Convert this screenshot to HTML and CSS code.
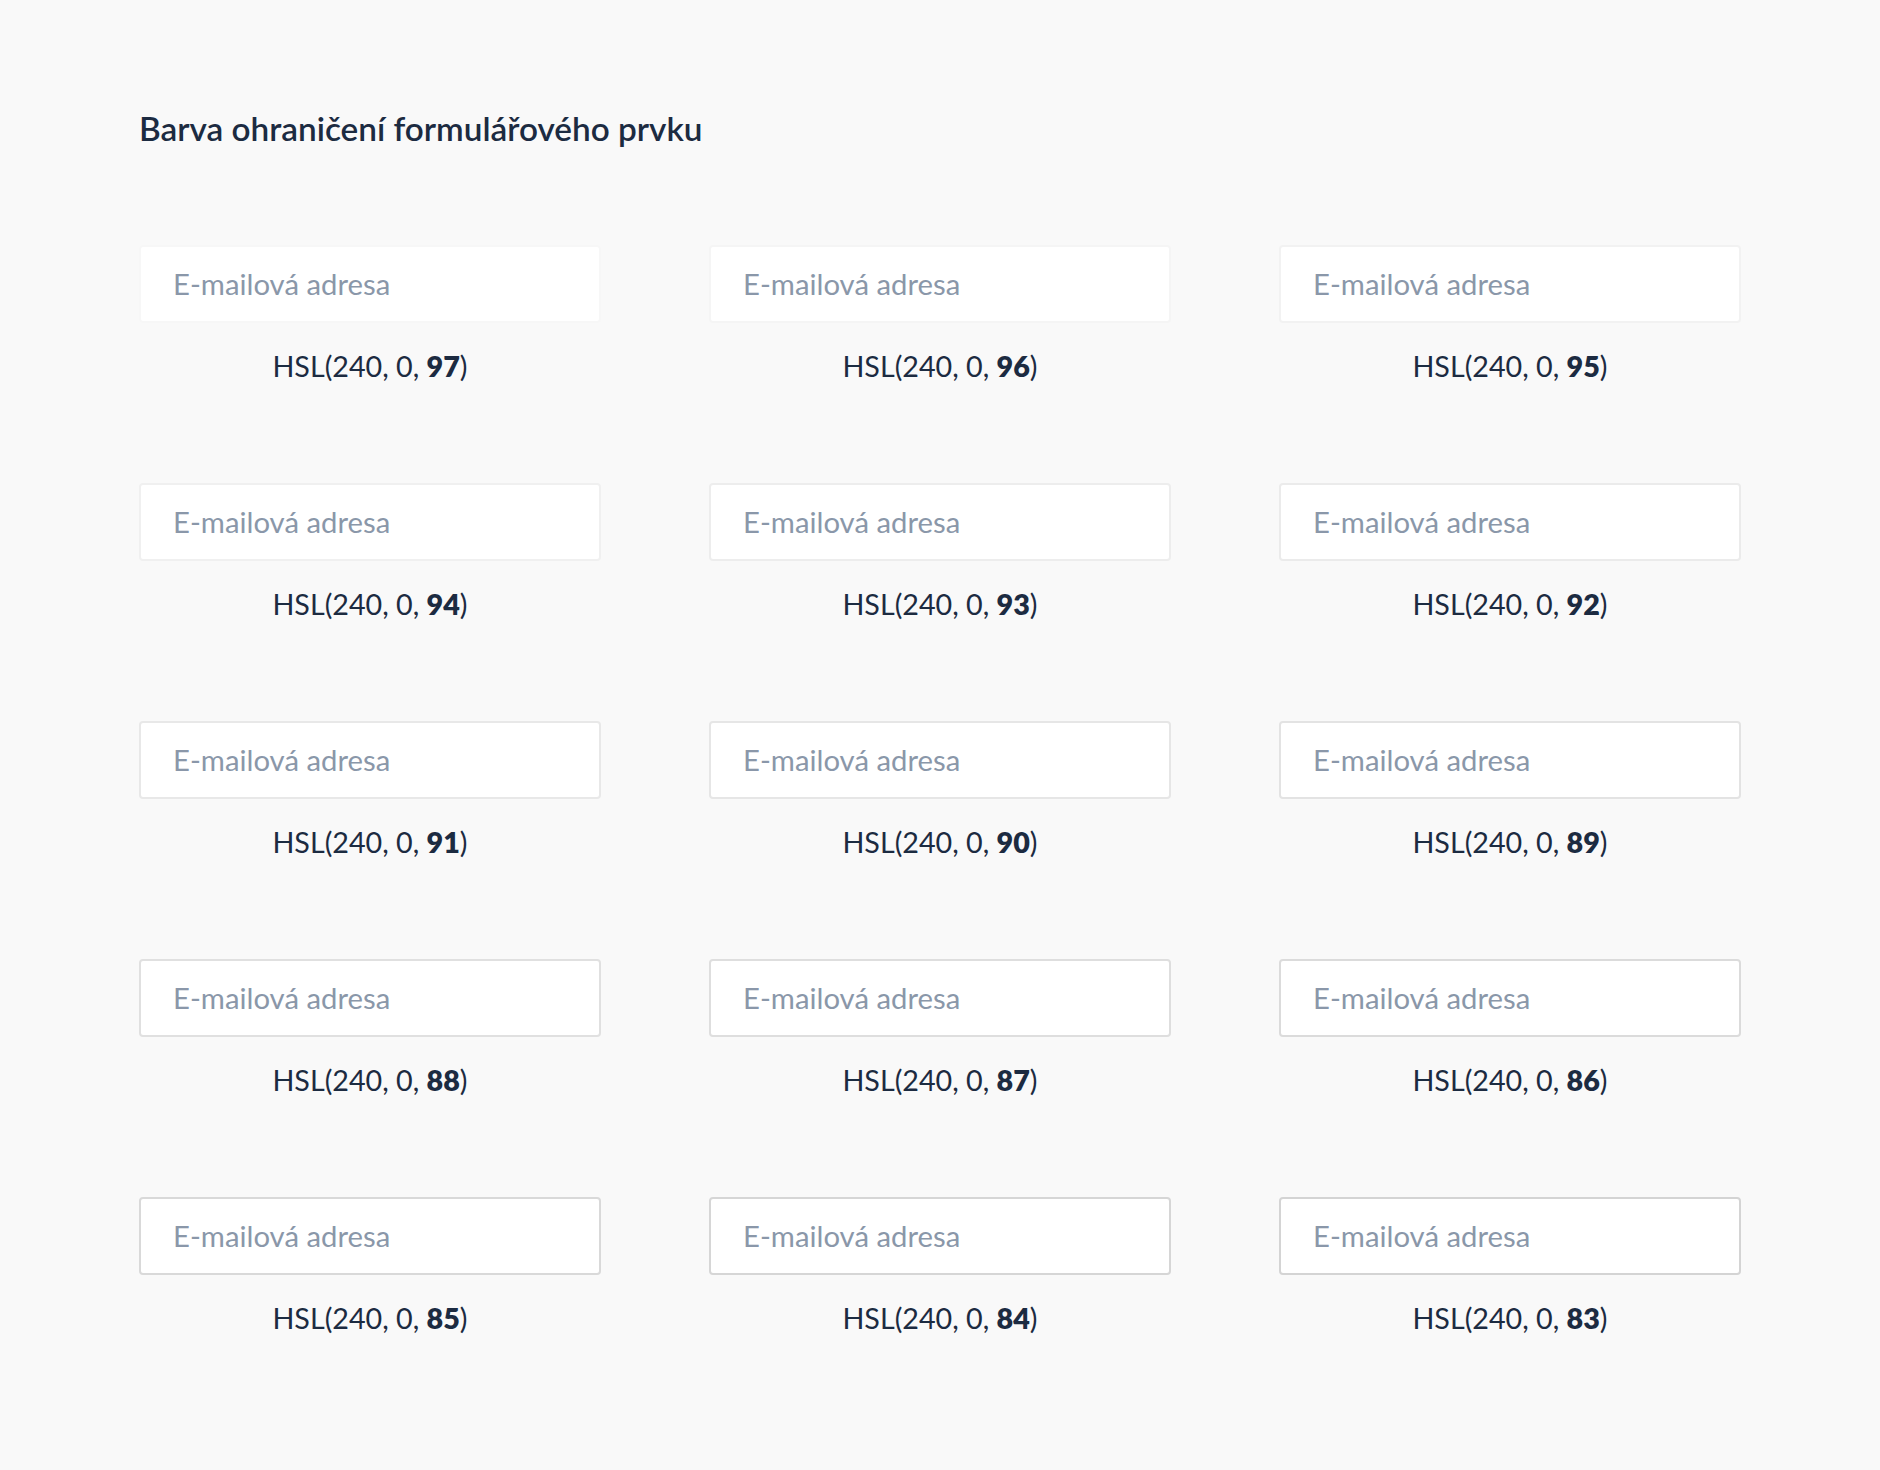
FILE: index.html
```html
<!DOCTYPE html>
<html lang="cs">
<head>
<meta charset="utf-8">
<title>Barva ohraničení formulářového prvku</title>
<link rel="stylesheet" href="styles.css">
</head>
<body>
<main class="page">
  <h1 class="title">Barva ohraničení formulářového prvku</h1>
  <div class="grid">
    <div class="cell"><div class="field l97"><span class="ph">E-mailová adresa</span></div><p class="label">HSL(240, 0, <b>97</b>)</p></div>
    <div class="cell"><div class="field l96"><span class="ph">E-mailová adresa</span></div><p class="label">HSL(240, 0, <b>96</b>)</p></div>
    <div class="cell"><div class="field l95"><span class="ph">E-mailová adresa</span></div><p class="label">HSL(240, 0, <b>95</b>)</p></div>
    <div class="cell"><div class="field l94"><span class="ph">E-mailová adresa</span></div><p class="label">HSL(240, 0, <b>94</b>)</p></div>
    <div class="cell"><div class="field l93"><span class="ph">E-mailová adresa</span></div><p class="label">HSL(240, 0, <b>93</b>)</p></div>
    <div class="cell"><div class="field l92"><span class="ph">E-mailová adresa</span></div><p class="label">HSL(240, 0, <b>92</b>)</p></div>
    <div class="cell"><div class="field l91"><span class="ph">E-mailová adresa</span></div><p class="label">HSL(240, 0, <b>91</b>)</p></div>
    <div class="cell"><div class="field l90"><span class="ph">E-mailová adresa</span></div><p class="label">HSL(240, 0, <b>90</b>)</p></div>
    <div class="cell"><div class="field l89"><span class="ph">E-mailová adresa</span></div><p class="label">HSL(240, 0, <b>89</b>)</p></div>
    <div class="cell"><div class="field l88"><span class="ph">E-mailová adresa</span></div><p class="label">HSL(240, 0, <b>88</b>)</p></div>
    <div class="cell"><div class="field l87"><span class="ph">E-mailová adresa</span></div><p class="label">HSL(240, 0, <b>87</b>)</p></div>
    <div class="cell"><div class="field l86"><span class="ph">E-mailová adresa</span></div><p class="label">HSL(240, 0, <b>86</b>)</p></div>
    <div class="cell"><div class="field l85"><span class="ph">E-mailová adresa</span></div><p class="label">HSL(240, 0, <b>85</b>)</p></div>
    <div class="cell"><div class="field l84"><span class="ph">E-mailová adresa</span></div><p class="label">HSL(240, 0, <b>84</b>)</p></div>
    <div class="cell"><div class="field l83"><span class="ph">E-mailová adresa</span></div><p class="label">HSL(240, 0, <b>83</b>)</p></div>
  </div>
</main>
</body>
</html>
```

FILE: styles.css
```css
* { box-sizing: border-box; }

html, body {
  margin: 0;
  padding: 0;
  background: #f9f9f9;
}

body {
  font-family: Lato, "Noto Sans", sans-serif;
  color: #1c2b41;
}

.page {
  padding: 108px 139px 0;
}

.title {
  margin: 0;
  font-size: 33.3px;
  line-height: 40px;
  font-weight: 600;
  color: #1c2b41;
}

.grid {
  margin-top: 97px;
  display: grid;
  grid-template-columns: repeat(3, 462px);
  column-gap: 108px;
  row-gap: 99px;
}

.cell {
  display: flex;
  flex-direction: column;
  align-items: stretch;
}

.field {
  height: 78px;
  background: #ffffff;
  border: 2px solid #f7f7f7;
  border-radius: 4px;
  display: flex;
  align-items: center;
  padding: 0 32px;
}

.ph {
  font-size: 29.3px;
  line-height: 36px;
  color: #8a97a9;
}

.label {
  margin: 25px 0 0;
  text-align: center;
  font-size: 28.7px;
  line-height: 36px;
  color: #1c2b41;
}

.label b { font-weight: 800; }

.l97 { border-color: hsl(240, 0%, 97%); }
.l96 { border-color: hsl(240, 0%, 96%); }
.l95 { border-color: hsl(240, 0%, 95%); }
.l94 { border-color: hsl(240, 0%, 94%); }
.l93 { border-color: hsl(240, 0%, 93%); }
.l92 { border-color: hsl(240, 0%, 92%); }
.l91 { border-color: hsl(240, 0%, 91%); }
.l90 { border-color: hsl(240, 0%, 90%); }
.l89 { border-color: hsl(240, 0%, 89%); }
.l88 { border-color: hsl(240, 0%, 88%); }
.l87 { border-color: hsl(240, 0%, 87%); }
.l86 { border-color: hsl(240, 0%, 86%); }
.l85 { border-color: hsl(240, 0%, 85%); }
.l84 { border-color: hsl(240, 0%, 84%); }
.l83 { border-color: hsl(240, 0%, 83%); }
```
